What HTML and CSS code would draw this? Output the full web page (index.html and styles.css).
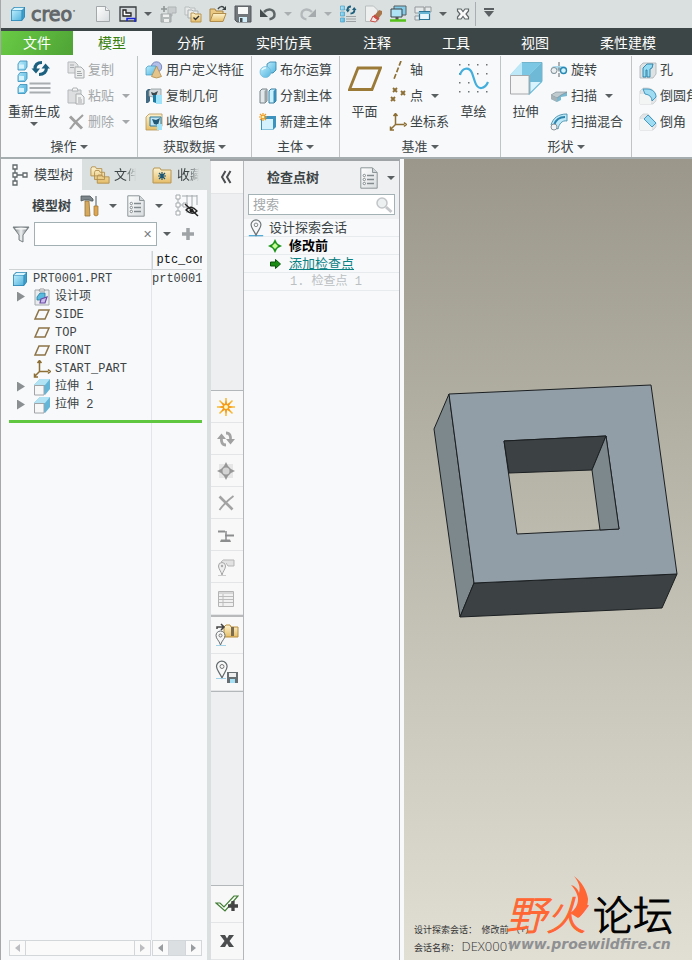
FILE: index.html
```html
<!DOCTYPE html>
<html lang="zh-CN">
<head>
<meta charset="utf-8">
<title>creo</title>
<link rel="stylesheet" href="styles.css">
</head>
<body>
<svg class="sprite" aria-hidden="true">
  <defs>
    <linearGradient id="gBlue" x1="0" y1="0" x2="1" y2="1"><stop offset="0" stop-color="#b9ecfc"/><stop offset="1" stop-color="#54b4de"/></linearGradient>
    <linearGradient id="gGold" x1="0" y1="0" x2="0" y2="1"><stop offset="0" stop-color="#fdf3d0"/><stop offset="1" stop-color="#e5bd68"/></linearGradient>
    <linearGradient id="gPaper" x1="0" y1="0" x2="1" y2="1"><stop offset="0" stop-color="#ffffff"/><stop offset="1" stop-color="#d8dcde"/></linearGradient>
    <linearGradient id="gSteel" x1="0" y1="0" x2="1" y2="0"><stop offset="0" stop-color="#5a6266"/><stop offset=".5" stop-color="#f0f2f3"/><stop offset="1" stop-color="#5a6266"/></linearGradient>
  </defs>
  <symbol id="cube" viewBox="0 0 16 16"><path d="M1 4l3-3h11v10l-3 4H1z" fill="#2c86b5"/><path d="M1.800 4.500h9.700v9.700H1.800z" fill="url(#gBlue)"/><path d="M2 4l2.500-2.300h9.700L12 4z" fill="#d6f5ff"/><path d="M12.300 4.500l2-2.200v8.400l-2 2.700z" fill="#3f9fcb"/></symbol>
  <symbol id="new" viewBox="0 0 18 18"><path d="M2.500 1.500h9l4 4v11h-13z" fill="url(#gPaper)" stroke="#a3a8ab"/><path d="M11.500 1.500v4h4" fill="#eef0f1" stroke="#a3a8ab"/></symbol>
  <symbol id="win" viewBox="0 0 18 18"><path d="M1 2h16v14H1z" fill="#d3d9da" stroke="#383e40" stroke-width="1.300"/><path d="M4 5h3v3h5v3H4z" fill="#fff" stroke="#222" stroke-width="1.300"/><path d="M8 16v-2.500h8V17" fill="none" stroke="#1924d6" stroke-width="1.500"/></symbol>
  <symbol id="regenGray" viewBox="0 0 18 18"><path d="M9 2h8v6h-4v3H9z" fill="#c8cccd" stroke="#aeb3b4"/><path d="M2 9h10v8H2z" fill="#b4b9ba" stroke="#a2a7a8"/><path d="M4 9.500h6V12H4zM5 14h5v3H5z" fill="#eef0f0"/><path d="M5 1v6M2 4h6" stroke="#8f9596" stroke-width="1.600"/></symbol>
  <symbol id="foldChk" viewBox="0 0 18 18"><path d="M1 2h4l1 1h5v7H1z" fill="#e8eaea" stroke="#b8bdbe"/><path d="M4 5h4l1 1h5v7H4z" fill="#eceeee" stroke="#a9aeaf"/><path d="M7 8h3l1 1h6v8H7z" fill="url(#gGold)" stroke="#b99655"/><path d="M9.500 12.500l2 2 3.500-3.500" fill="none" stroke="#333" stroke-width="1.400"/></symbol>
  <symbol id="open" viewBox="0 0 18 18"><path d="M1 16V4h5l1 2h7v3" fill="#e9c983" stroke="#a78345"/><path d="M1 16.500l3-8h13l-3 8z" fill="url(#gGold)" stroke="#b08d4c"/><path d="M9 4c2-3 5-3 6-1" fill="none" stroke="#3b4244" stroke-width="1.500"/><path d="M17 1v4h-4z" fill="#3b4244"/></symbol>
  <symbol id="save" viewBox="0 0 18 18"><path d="M1 1h16v16H3l-2-2z" fill="#71777b" stroke="#53595c"/><path d="M4 2h10v7H4z" fill="#f7f8f8"/><path d="M5 12h8v5H5z" fill="#d0eefa"/><path d="M6 13h2.500v4H6z" fill="#444c50"/></symbol>
  <symbol id="undo" viewBox="0 0 18 18"><path d="M5 7c4-4 10-3 10.500 2 .3 3-2 5-5 5.300" fill="none" stroke="#5e6567" stroke-width="2.500"/><path d="M1 4v8h8z" fill="#454c4e"/></symbol>
  <symbol id="redo" viewBox="0 0 18 18"><path d="M13 7C9 3 3 4 2.500 9c-.3 3 2 5 5 5.300" fill="none" stroke="#b3b9ba" stroke-width="2.300"/><path d="M17 4v8H9z" fill="#a5abac"/></symbol>
  <symbol id="regenS" viewBox="0 0 18 18"><g fill="url(#gBlue)" stroke="#4a9fc6" stroke-width=".7"><path d="M1.500 1h4v4h-4zM1.500 7h4v4h-4zM1.500 13h4v4h-4z"/></g><path d="M7 11.500h10M7 14h10M7 16.500h10" stroke="#9da3a5" stroke-width="1.200"/><path d="M12 1.500C9.500 1.500 8.500 3 8.500 5M11.500 8.500c2.500 0 4-1.500 4-4" fill="none" stroke="#1d607d" stroke-width="1.800"/><path d="M6.500 4.500h4.500L8.800 7.500zM17.500 5H13l2.200-3z" fill="#1d607d"/></symbol>
  <symbol id="erase" viewBox="0 0 18 18"><path d="M1.500 1h8l4 4v11.500h-12z" fill="#eef0f0" stroke="#b9bebf"/><path d="M10 11l5-6 3 1v3l-4 5z" fill="#a8754b"/><path d="M9 11l4.500 3.500-2 2.500-5-1z" fill="#f3e5e4" stroke="#c94c43"/><path d="M10.500 9.500l5 4-1.500 2-5-4z" fill="#c94c43"/></symbol>
  <symbol id="monitor" viewBox="0 0 18 18"><path d="M5 1h12v9H5z" fill="#82ccea" stroke="#565e61"/><path d="M2 4h11v8H2z" fill="#aee2f5" stroke="#3c4548"/><path d="M8 12v3" stroke="#555" stroke-width="3"/><path d="M1 15.500h16" stroke="#55c11b" stroke-width="2.500"/></symbol>
  <symbol id="windows" viewBox="0 0 18 18"><path d="M1 2h9v6H1zM1 11h5v4H1zM11 2h6v5h-6z" fill="#e6e9e9" stroke="#93999b"/><path d="M5.500 6.500h10v8h-10z" fill="#e9f7fc" stroke="#2d7697" stroke-width="1.200"/><path d="M5 8h11" stroke="#6ab5d4" stroke-width="2"/></symbol>
  <symbol id="closeO" viewBox="0 0 14 14"><path d="M1.500 2h3.500l2 2.500L9 2h3.500v2L10 7l2.500 3v2H9L7 9.500 5 12H1.500v-2L4 7 1.500 4z" fill="#fafafa" stroke="#5e6668" stroke-width="1.200"/></symbol>
  <symbol id="regen" viewBox="0 0 34 36"><g stroke="#368eb8" stroke-width=".8"><path d="M1 4l2-3h7v6l-2 3H1zM1 15.500l2-3h7v6l-2 3H1zM1 27.500l2-3h7v6l-2 3H1z" fill="url(#gBlue)"/></g><path d="M2 4.500h5v4H2zM2 16h5v4H2zM2 28h5v4H2z" fill="#d6f3fd"/><path d="M12.500 23.500h21M12.500 28h21M12.500 32.500h21" stroke="#a9adb0" stroke-width="2"/><path d="M25 2.500C20 2.500 18 5 18 9M22 14.500c5 0 7.500-3 7.500-7" fill="none" stroke="#1b607f" stroke-width="3.200"/><path d="M14.500 8.500h8.500l-4 5zM33 8.500h-8.500l4-5z" fill="#1b607f"/></symbol>
  <symbol id="copy" viewBox="0 0 18 18"><path d="M1 1h7l3 3v8H1z" fill="#e1e3e4" stroke="#b7babc"/><path d="M8 6h6l3 3v8H8z" fill="#eceded" stroke="#a9acae"/><path d="M3 4h4M3 6.500h4M10 10.500h4M10 12.500h5M10 14.500h5" stroke="#a6a9ab"/></symbol>
  <symbol id="paste" viewBox="0 0 18 18"><path d="M1 3h13v13H1z" fill="#dcdedf" stroke="#b5b8ba"/><path d="M5 4l1-3h4l1 3z" fill="#f7f7f7" stroke="#b0b3b5"/><path d="M9 7h5l3 3v7H9z" fill="#f0f1f1" stroke="#a8abad"/><path d="M11 11h3M11 13h4M11 15h4" stroke="#a6a9ab"/></symbol>
  <symbol id="delx" viewBox="0 0 18 18"><path d="M3 3.500l12 12" stroke="#a0a0a0" stroke-width="3"/><path d="M16 2C10 7 7 10 3 16" fill="none" stroke="#a0a0a0" stroke-width="2.200"/></symbol>
  <symbol id="udf" viewBox="0 0 18 18"><circle cx="11.500" cy="6" r="5.200" fill="#b4bfe7" stroke="#6473b1" stroke-width=".8"/><path d="M1 7l2-2h8v7l-2 2H1z" fill="url(#gBlue)" stroke="#4197c0" stroke-width=".7"/><path d="M11.500 5l5 10.500q-5 3-10 0z" fill="#e3c48b" stroke="#aa8646" stroke-width=".7"/></symbol>
  <symbol id="copygeo" viewBox="0 0 18 18"><path d="M1 4l2-2h2v12l-2 2H1z" fill="#426a83"/><path d="M4 4l2-2h10v6l-2 2H8l-4-1z" fill="#d4dadd" stroke="#8d979b" stroke-width=".8"/><path d="M6 5l3 1 4-2-2 5-4-1z" fill="#39474e"/><path d="M11 8h6v9h-6z" fill="#9fe3fa"/><path d="M8 8h3v8l-3-1z" fill="#197ca6"/></symbol>
  <symbol id="shrink" viewBox="0 0 18 18"><path d="M1 4l3-3h13v12l-3 4H1z" fill="url(#gGold)" stroke="#b79655" stroke-width=".8"/><path d="M5 4h11v9H5z" fill="#c2e5f3" stroke="#2d789c"/><path d="M7 6l4 1 4-2-2 7-4-1z" fill="#205876"/><path d="M12 11h5v6h-5z" fill="#a2e3fa"/></symbol>
  <symbol id="bool" viewBox="0 0 18 18"><path d="M8 3l3-2h6v8l-3 3H8z" fill="url(#gBlue)" stroke="#2e7fa5" stroke-width=".8"/><circle cx="6.500" cy="11" r="5.500" fill="url(#gBlue)" stroke="#6fb8d7" stroke-width=".7"/><path d="M3 9a4 4 0 0 1 4-2" stroke="#e7faff" fill="none" stroke-width="1.500"/></symbol>
  <symbol id="split" viewBox="0 0 18 18"><path d="M1 4l2-2h5v12l-2 2H1z" fill="#e1e7ea" stroke="#69757b" stroke-width=".9"/><path d="M10 4l2-2h5v12l-2 2h-5z" fill="#c9f0fc" stroke="#216f95" stroke-width=".9"/><path d="M14.500 4v12l2.500-2V2z" fill="#388eb8"/><path d="M5.500 4v12L8 14V2z" fill="#99a3a8"/></symbol>
  <symbol id="newbody" viewBox="0 0 18 18"><path d="M2 6l3-3h12v11l-3 3H2z" fill="#3d93bd"/><path d="M3 6h11v10.500H3z" fill="#d3f2fd"/><path d="M4 0v8M0 4h8M1 1l6 6M7 1L1 7" stroke="#f19a1f" stroke-width="1.200"/><circle cx="4" cy="4" r="1.300" fill="#fff2a4"/></symbol>
  <symbol id="planeL" viewBox="0 0 34 36"><path d="M10 8h22.500l-8.500 21.500H1.500z" fill="none" stroke="#9b7a38" stroke-width="2.800"/></symbol>
  <symbol id="axis" viewBox="0 0 18 18"><path d="M12 0L5 18" stroke="#8d6f35" stroke-width="1.700" stroke-dasharray="5 2"/></symbol>
  <symbol id="points" viewBox="0 0 18 18"><path d="M4 1l4 4M8 1L4 5M12 4l4 4M16 4l-4 4M2 10l4 4M6 10l-4 4" stroke="#8d6f35" stroke-width="1.900"/></symbol>
  <symbol id="csys" viewBox="0 0 18 18"><path d="M6.500 2v9.500h9M6.500 11.500L2 16M4.500 3l2-2.500 2 2.500M15 9.500l2.500 2-2.500 2M1.500 13.500v3.500H5" fill="none" stroke="#8d6f35" stroke-width="1.500"/></symbol>
  <symbol id="sketch" viewBox="0 0 34 36"><g fill="#6e7375"><path d="M2 4h1.500v1.500H2zM11 4h1.500v1.500H11zM20 4h1.500v1.500H20zM29 4h1.500v1.500H29zM2 13h1.500v1.500H2zM20 13h1.500v1.500H20zM29 13h1.500v1.500H29zM2 22h1.500v1.500H2zM11 22h1.500v1.500H11zM2 31h1.500v1.500H2zM11 31h1.500v1.500H11zM20 31h1.500v1.500H20zM29 31h1.500v1.500H29z"/></g><path d="M3 15C5 8 12 6 15 13l3 9c3 9 10 7 13 0" fill="none" stroke="#43aedb" stroke-width="2.200"/></symbol>
  <symbol id="extL" viewBox="0 0 34 36"><path d="M1 15L13 2h20v20L20 35z" fill="#91d5ee"/><path d="M1 15L13 2h20L20 15z" fill="#bde8f7"/><path d="M20 15L33 2v20L20 35z" fill="#6fb9d6"/><path d="M13 2v13h7L33 2z" fill="#7cc8e4"/><path d="M1.500 15.500H20V34H1.500z" fill="#f5f5f6" stroke="#a6a8aa"/><path d="M13 2.500h20v19" stroke="#73b4cd" fill="none"/><path d="M21.500 32l10-10h-10z" fill="#d9f4fd"/></symbol>
  <symbol id="ext" viewBox="0 0 18 18"><path d="M1 7l6-6h10v10l-5 6z" fill="#63b6d8"/><path d="M1 7l6-6h10l-5 6z" fill="#b1e3f5"/><path d="M1.500 7.500H11V17H1.500z" fill="#f7f7f7" stroke="#a0a4a6"/></symbol>
  <symbol id="revolve" viewBox="0 0 18 18"><path d="M1 9q0-4 4-4h8q4 0 4 4l-1 4h-4V9H6v4H2z" fill="#abd9ec"/><circle cx="4" cy="9.500" r="3" fill="#eaf0f2" stroke="#848d91"/><circle cx="13.500" cy="9.500" r="3" fill="#d2f3fd" stroke="#2788b3" stroke-width="1.400"/><path d="M9 1v16" stroke="#777d80" stroke-width="1.200" stroke-dasharray="4 1.500"/></symbol>
  <symbol id="sweep" viewBox="0 0 18 18"><path d="M1 9l5-4h11v4l-6 1v3L7 15l-6-3z" fill="#78b8d1"/><path d="M1 8l5-3h11l-6 3-4 3z" fill="#c0cbd0" stroke="#7b888d" stroke-width=".6"/><path d="M1 8l6 3v4l-6-3z" fill="#a7b2b7"/></symbol>
  <symbol id="blend" viewBox="0 0 18 18"><path d="M1 12C3 5 8 1 17 1v7c-5-1-8 3-9 8z" fill="#bde8f7" stroke="#478eac" stroke-width=".9"/><path d="M4 12C6 6 10 4 15 4" fill="none" stroke="#2c84ad" stroke-width="2"/><circle cx="4" cy="14" r="3" fill="#f1f3f4" stroke="#8c9395"/></symbol>
  <symbol id="hole" viewBox="0 0 18 18"><path d="M1 5l3-3h13v11l-3 4H1z" fill="#dfe2e3" stroke="#abb0b2" stroke-width=".8"/><path d="M4 16V7l4-4h6l-1 4-2 1v8h-3V9H7v7z" fill="#93dbf3" stroke="#267da5" stroke-width=".9"/></symbol>
  <symbol id="round" viewBox="0 0 18 18"><path d="M1 4l3-3h4c5 0 9 4 9 9v4l-3 3H1z" fill="#e2e4e5" stroke="#cdd0d1" stroke-width=".8"/><path d="M1 7h5c4 0 6 3 6 6v4H1z" fill="#f3f4f4"/><path d="M4 2h4c6 0 9 4 9 8l-4 4q0-6-7-7z" fill="#9fdcf2" stroke="#3692bd" stroke-width=".9"/></symbol>
  <symbol id="chamfer" viewBox="0 0 18 18"><path d="M1 4l3-3h5l8 9v4l-3 3H1z" fill="#e2e4e5" stroke="#cdd0d1" stroke-width=".8"/><path d="M1 6h4l8 8v3H1z" fill="#f3f4f4"/><path d="M5 6l4-4 8 8-4 4z" fill="#9fdcf2" stroke="#3692bd" stroke-width=".9"/></symbol>
  <symbol id="treeI" viewBox="0 0 20 22"><g fill="#fff" stroke="#62696b" stroke-width="1.300"><path d="M5 5v12M5 11h8" /><path d="M3 1h4v4H3zM3 9h4v4H3zM3 17h4v4H3zM13 9h4v4h-4z"/></g></symbol>
  <symbol id="folders" viewBox="0 0 22 20"><g fill="url(#gGold)" stroke="#b28f50"><path d="M1 3l1-2h4l1 2h6v8H1zM5 7l1-2h4l1 2h5v8H5zM8 12l1-2h4l1 2h7v7H8z"/></g></symbol>
  <symbol id="fav" viewBox="0 0 20 18"><path d="M1 4l1-2h6l1 2h10v13H1z" fill="url(#gGold)" stroke="#b79655"/><path d="M10 6v8M6 10h8M7 7l6 6M13 7l-6 6" stroke="#1d5673" stroke-width="1.200"/></symbol>
  <symbol id="tools" viewBox="0 0 20 22"><path d="M5 6h4l1 15H5z" fill="#d6a95c" stroke="#94713a" stroke-width=".8"/><path d="M1 1h9l3 3v2h-2L9 5H4L1 6z" fill="#7d868a" stroke="#4d5558" stroke-width=".8"/><path d="M15 1h2v10h-2z" fill="#a3aaad"/><path d="M14 11h4v9q-2 2-4 0z" fill="#dda653" stroke="#9b7434" stroke-width=".7"/></symbol>
  <symbol id="list" viewBox="0 0 18 22"><path d="M.8.800h11.700l4.700 4.700v15.700H.8z" fill="url(#gPaper)" stroke="#8e9699"/><path d="M12.500 1v4.500H17" fill="#cfd4d6" stroke="#8e9699"/><path d="M7 8.500h7M7 12.500h7M7 16.500h7" stroke="#848b8e" stroke-width="1.300"/><g fill="#fff" stroke="#70777a" stroke-width=".8"><circle cx="4.300" cy="8.500" r="1.200"/><circle cx="4.300" cy="12.500" r="1.200"/><circle cx="4.300" cy="16.500" r="1.200"/></g></symbol>
  <symbol id="treeEye" viewBox="0 0 24 24"><g fill="#fff" stroke="#a4a9ab"><path d="M3 2v18M3 11h7M12 1v18M17 1v12M22 1v10M7 2h15" fill="none"/><path d="M1 1h4v4H1zM1 9h4v4H1zM1 17h4v4H1zM8 9h4v4H8z"/></g><path d="M11 16q5-6 11 1-5 5-11-1z" fill="#e8e9e9" stroke="#222" stroke-width="1.300"/><circle cx="16.500" cy="16.500" r="2" fill="#222"/><path d="M10 10l13 12" stroke="#222" stroke-width="1.500"/></symbol>
  <symbol id="funnel" viewBox="0 0 18 18"><path d="M1 2h16l-6 8v7l-4-2v-5z" fill="url(#gSteel)" stroke="#798083"/><path d="M3 3h12l-1 1.500H4z" fill="#f6f7f7"/></symbol>
  <symbol id="plus" viewBox="0 0 14 14"><path d="M7 1v12M1 7h12" stroke="#a0a3a5" stroke-width="3.500"/></symbol>
  <symbol id="items" viewBox="0 0 18 18"><path d="M2 2h14v15H2z" fill="#e9ebec" stroke="#a5aaad"/><path d="M6 3l1-2h4l1 2z" fill="#fff" stroke="#999"/><path d="M4 9l3-4h5v4l-3 3H4z" fill="#59bbdf" stroke="#287ca1" stroke-width=".8"/><path d="M8 11l6-2-2 6H7z" fill="#cbbce9" stroke="#6b4ba6" stroke-width="1.200"/></symbol>
  <symbol id="plane" viewBox="0 0 18 14"><path d="M6 2h10l-4 9H2z" fill="none" stroke="#8d7345" stroke-width="1.500"/></symbol>
  <symbol id="pin" viewBox="0 0 18 20"><path d="M1 18.500h16" stroke="#54abd5" stroke-width="1.500"/><path d="M9 18C7 13 3.500 10 3.500 6.500a5.500 5.500 0 0 1 11 0C14.500 10 11 13 9 18z" fill="#f7f8f9" stroke="#6c7274" stroke-width="1.300"/><circle cx="9" cy="6.500" r="2" fill="none" stroke="#777d7f"/></symbol>
  <symbol id="target" viewBox="0 0 14 14"><path d="M7 0l2 4 1 1 4 2-4 2-1 1-2 4-2-4-1-1-4-2 4-2 1-1z" fill="#1c9218"/><path d="M7 4l3 3-3 3-3-3z" fill="#c9ff99"/></symbol>
  <symbol id="arrowG" viewBox="0 0 14 14"><path d="M2.500 5h5V2.500l5 4.500-5 4.500V9h-5z" fill="#198c13" stroke="#0b530b"/></symbol>
  <symbol id="mag" viewBox="0 0 18 18"><path d="M11 11l5.500 5" stroke="#c5c8ca" stroke-width="3"/><circle cx="7" cy="7" r="5" fill="#edf0f1" stroke="#c2c6c8" stroke-width="1.500"/></symbol>
  <symbol id="star" viewBox="0 0 18 18"><path d="M9 0v18M0 9h18M2.500 2.500l13 13M15.500 2.500l-13 13" stroke="#f8bb36" stroke-width="1.600"/><path d="M9 2l1.300 4L14 4l-2 3.700L16 9l-4 1.300L14 14l-3.700-2L9 16l-1.300-4L4 14l2-3.700L2 9l4-1.300L4 4l3.700 2z" fill="#f59b1b"/><circle cx="9" cy="9" r="2" fill="#fff7bf"/></symbol>
  <symbol id="cycle" viewBox="0 0 18 18"><path d="M9 15C5 15 4 12 4.500 7M9 3c4 0 5 3 4.500 8" fill="none" stroke="#a4a4a4" stroke-width="2.800"/><path d="M0 9l4.500-5.500L9 9zM18 9l-4.500 5.500L9 9z" fill="#a0a0a0"/></symbol>
  <symbol id="gem" viewBox="0 0 18 18"><path d="M2 2h14v14H2z" fill="#e6e6e6"/><path d="M9 0l2 4 3 3 4 2-4 2-3 3-2 4-2-4-3-3-4-2 4-2 3-3z" fill="#979797"/><circle cx="9" cy="9" r="3.500" fill="#d4d4d4"/></symbol>
  <symbol id="xg" viewBox="0 0 18 18"><path d="M2.500 2.500l13 13" stroke="#a3a3a3" stroke-width="2.600"/><path d="M16.500 2C10 7 6 11 2.500 16" fill="none" stroke="#a3a3a3" stroke-width="1.800"/></symbol>
  <symbol id="level" viewBox="0 0 18 18"><path d="M1 5.500h7M8 9.500h9" stroke="#8b8d8e" stroke-width="2.200"/><path d="M9 5v9" stroke="#8b8d8e" stroke-width="1.500"/><path d="M4 13.500h9l1 2.500H3z" fill="#8b8d8e"/></symbol>
  <symbol id="pinG" viewBox="0 0 18 18"><path d="M4 4q2-3 5-2h8v6h-6L9 5" fill="#e2e2e2" stroke="#b5b5b5"/><path d="M5 17C4 13 1.500 11 1.500 8a3.500 3.500 0 0 1 7 0C8.500 11 6 13 5 17z" fill="#eee" stroke="#a4a4a4"/><circle cx="5" cy="8" r="1.200" fill="#aaa"/><path d="M1 17.500h8" stroke="#ccc"/></symbol>
  <symbol id="table" viewBox="0 0 18 18"><path d="M1.500 1.500h15v15h-15z" fill="#f1f1f1" stroke="#b4b4b4"/><path d="M2 3h14M6 4v12M2 6.500h14M2 9.500h14M2 12.500h14" stroke="#bcbcbc"/></symbol>
  <symbol id="pinFold" viewBox="0 0 24 24"><path d="M9 4l2-2h4l1 2h7v10H9z" fill="url(#gGold)" stroke="#b88e3d"/><path d="M16 4h3v9h-3z" fill="#7a6b4c"/><path d="M5.500 22C4 17 1 16 1 12.500a4.500 4.500 0 0 1 9 0C10 16 7 17 5.500 22z" fill="#f6f6f6" stroke="#686e70"/><circle cx="5.500" cy="12.500" r="1.500" fill="none" stroke="#777"/><path d="M2 6V4h6M6 1l3 3-3 3" fill="none" stroke="#444" stroke-width="1.500"/><path d="M1 22.500h10" stroke="#a4d3e8"/></symbol>
  <symbol id="pinSave" viewBox="0 0 24 24"><path d="M7 18C5 13 1.500 10 1.500 6.500a5.300 5.300 0 0 1 10.600 0C12 10 9 13 7 18z" fill="#f8f8f8" stroke="#62696b" stroke-width="1.200"/><circle cx="7" cy="6.500" r="2" fill="none" stroke="#777"/><path d="M1 18.500h10" stroke="#9fd0e5"/><path d="M12 12h11v11H12z" fill="#686f73"/><path d="M14 13h7v4h-7z" fill="#eee"/><path d="M15 19h5v4h-5z" fill="#a5dff3"/></symbol>
  <symbol id="okPlus" viewBox="0 0 24 20"><path d="M1 9h4l4 4L19 2h4L10 17z" fill="#f7fcf5" stroke="#437d35" stroke-width="1.200"/><path d="M18 7v10M13 12h10" stroke="#444" stroke-width="3.300"/></symbol>
  <symbol id="xb" viewBox="0 0 14 14"><path d="M0 1h5l2 3.500L9 1h5l-4.500 6 4.500 6H9L7 9.500 5 13H0l4.500-6z" fill="#4b4d4e"/></symbol>
  <symbol id="chev" viewBox="0 0 14 14"><path d="M6.500 1L3 7l3.500 6M11.500 1L8 7l3.500 6" fill="none" stroke="#4c4f50" stroke-width="2"/></symbol>
</svg>

<div class="app">
  <header class="titlebar">
    <svg class="i16 logo"><use href="#cube"/></svg>
    <span class="brand">creo<sup>•</sup></span>
    <nav class="quick" aria-label="快速访问">
      <button aria-label="新建"><svg class="i18"><use href="#new"/></svg></button>
      <button aria-label="窗口"><svg class="i18"><use href="#win"/></svg></button>
      <button class="drop" aria-label="更多"><i class="caret"></i></button>
      <button aria-label="再生"><svg class="i18"><use href="#regenGray"/></svg></button>
      <button aria-label="选择"><svg class="i18"><use href="#foldChk"/></svg></button>
      <button aria-label="打开"><svg class="i18"><use href="#open"/></svg></button>
      <button aria-label="保存"><svg class="i18"><use href="#save"/></svg></button>
      <button aria-label="撤消"><svg class="i18"><use href="#undo"/></svg></button>
      <button class="drop" aria-label="撤消列表"><i class="caret dim"></i></button>
      <button aria-label="重做"><svg class="i18"><use href="#redo"/></svg></button>
      <button class="drop" aria-label="重做列表"><i class="caret dim"></i></button>
      <button aria-label="重新生成"><svg class="i18"><use href="#regenS"/></svg></button>
      <button aria-label="拭除"><svg class="i18"><use href="#erase"/></svg></button>
      <button aria-label="显示"><svg class="i18"><use href="#monitor"/></svg></button>
      <button aria-label="窗口列表"><svg class="i18"><use href="#windows"/></svg></button>
      <button class="drop" aria-label="窗口菜单"><i class="caret"></i></button>
      <button aria-label="关闭"><svg class="i14"><use href="#closeO"/></svg></button>
      <span class="vsep"></span>
      <button aria-label="自定义"><i class="caret lined"></i></button>
    </nav>
  </header>

  <nav class="tabs">
    <button class="tab file">文件</button><button class="tab active">模型</button><button class="tab">分析</button><button class="tab">实时仿真</button><button class="tab">注释</button><button class="tab">工具</button><button class="tab">视图</button><button class="tab">柔性建模</button>
  </nav>

  <section class="ribbon">
    <div class="group">
      <div class="tools">
        <button class="big wide"><svg class="i36"><use href="#regen"/></svg><span>重新生成</span><i class="caret"></i></button>
        <div class="stack">
          <button disabled><svg class="i18"><use href="#copy"/></svg>复制</button>
          <button disabled><svg class="i18"><use href="#paste"/></svg>粘贴<i class="caret"></i></button>
          <button disabled><svg class="i18"><use href="#delx"/></svg>删除<i class="caret"></i></button>
        </div>
      </div>
      <button class="label">操作<i class="caret"></i></button>
    </div>
    <div class="group">
      <div class="tools">
        <div class="stack lead">
          <button><svg class="i18"><use href="#udf"/></svg>用户定义特征</button>
          <button><svg class="i18"><use href="#copygeo"/></svg>复制几何</button>
          <button><svg class="i18"><use href="#shrink"/></svg>收缩包络</button>
        </div>
      </div>
      <button class="label">获取数据<i class="caret"></i></button>
    </div>
    <div class="group">
      <div class="tools">
        <div class="stack lead">
          <button><svg class="i18"><use href="#bool"/></svg>布尔运算</button>
          <button><svg class="i18"><use href="#split"/></svg>分割主体</button>
          <button><svg class="i18"><use href="#newbody"/></svg>新建主体</button>
        </div>
      </div>
      <button class="label">主体<i class="caret"></i></button>
    </div>
    <div class="group">
      <div class="tools">
        <button class="big"><svg class="i36"><use href="#planeL"/></svg><span>平面</span></button>
        <div class="stack">
          <button><svg class="i18"><use href="#axis"/></svg>轴</button>
          <button><svg class="i18"><use href="#points"/></svg>点<i class="caret"></i></button>
          <button><svg class="i18"><use href="#csys"/></svg>坐标系</button>
        </div>
        <button class="big"><svg class="i36"><use href="#sketch"/></svg><span>草绘</span></button>
      </div>
      <button class="label">基准<i class="caret"></i></button>
    </div>
    <div class="group">
      <div class="tools">
        <button class="big"><svg class="i36"><use href="#extL"/></svg><span>拉伸</span></button>
        <div class="stack">
          <button><svg class="i18"><use href="#revolve"/></svg>旋转</button>
          <button><svg class="i18"><use href="#sweep"/></svg>扫描<i class="caret"></i></button>
          <button><svg class="i18"><use href="#blend"/></svg>扫描混合</button>
        </div>
      </div>
      <button class="label">形状<i class="caret"></i></button>
    </div>
    <div class="group last">
      <div class="tools">
        <div class="stack lead">
          <button><svg class="i18"><use href="#hole"/></svg>孔</button>
          <button><svg class="i18"><use href="#round"/></svg>倒圆角</button>
          <button><svg class="i18"><use href="#chamfer"/></svg>倒角</button>
        </div>
      </div>
    </div>
  </section>

  <main class="work">
    <aside class="navigator">
      <div class="ntabs">
        <button class="ntab on"><svg class="i22"><use href="#treeI"/></svg><span>模型树</span></button>
        <button class="ntab files"><svg class="i22"><use href="#folders"/></svg><span>文件</span></button>
        <button class="ntab favs"><svg class="i22"><use href="#fav"/></svg><span>收藏</span></button>
      </div>
      <div class="nbody">
        <div class="nhead">
          <h2>模型树</h2>
          <button aria-label="设置"><svg class="i22"><use href="#tools"/></svg></button>
          <button aria-label="设置菜单"><i class="caret"></i></button>
          <button aria-label="显示"><svg class="i22"><use href="#list"/></svg></button>
          <button aria-label="显示菜单"><i class="caret"></i></button>
          <button class="end" aria-label="隐藏树"><svg class="i24"><use href="#treeEye"/></svg></button>
        </div>
        <div class="filter">
          <svg class="i18"><use href="#funnel"/></svg>
          <div class="field"><input type="text" aria-label="过滤"><button aria-label="清除">✕</button></div>
          <button aria-label="过滤菜单"><i class="caret"></i></button>
          <button aria-label="添加"><svg class="i14"><use href="#plus"/></svg></button>
        </div>
        <div class="treewrap">
          <table class="tree">
            <thead><tr><th></th><th>ptc_common</th></tr></thead>
            <tbody>
              <tr><td><div class="node root"><svg class="i16"><use href="#cube"/></svg>PRT0001.PRT</div></td><td>prt0001</td></tr>
              <tr><td><div class="node"><i class="tw"></i><svg class="i18"><use href="#items"/></svg>设计项</div></td><td></td></tr>
              <tr><td><div class="node"><i></i><svg class="i18"><use href="#plane"/></svg>SIDE</div></td><td></td></tr>
              <tr><td><div class="node"><i></i><svg class="i18"><use href="#plane"/></svg>TOP</div></td><td></td></tr>
              <tr><td><div class="node"><i></i><svg class="i18"><use href="#plane"/></svg>FRONT</div></td><td></td></tr>
              <tr><td><div class="node"><i></i><svg class="i18"><use href="#csys"/></svg>START_PART</div></td><td></td></tr>
              <tr><td><div class="node"><i class="tw"></i><svg class="i18"><use href="#ext"/></svg>拉伸 1</div></td><td></td></tr>
              <tr><td><div class="node"><i class="tw"></i><svg class="i18"><use href="#ext"/></svg>拉伸 2</div></td><td></td></tr>
            </tbody>
          </table>
          <div class="insert"></div>
        </div>
        <div class="bars">
          <div class="bar off"><button aria-label="向左"><i class="l"></i></button><span></span><button aria-label="向右"><i class="r"></i></button></div>
          <div class="bar"><button aria-label="向左"><i class="l"></i></button><span class="thumb"></span><button aria-label="向右"><i class="r"></i></button></div>
        </div>
      </div>
    </aside>

    <section class="explore">
      <div class="rail">
        <button class="fold" aria-label="折叠"><svg class="i14"><use href="#chev"/></svg></button>
        <div class="cmds">
          <button aria-label="新建"><svg class="i18"><use href="#star"/></svg></button>
          <button aria-label="更新"><svg class="i18"><use href="#cycle"/></svg></button>
          <button aria-label="激活"><svg class="i18"><use href="#gem"/></svg></button>
          <button aria-label="删除"><svg class="i18"><use href="#xg"/></svg></button>
          <button aria-label="级别"><svg class="i18"><use href="#level"/></svg></button>
          <button aria-label="编辑"><svg class="i18"><use href="#pinG"/></svg></button>
          <button aria-label="表"><svg class="i18"><use href="#table"/></svg></button>
          <button class="tall first" aria-label="打开会话"><svg class="i24"><use href="#pinFold"/></svg></button>
          <button class="tall" aria-label="保存会话"><svg class="i24"><use href="#pinSave"/></svg></button>
        </div>
        <div class="done">
          <button class="tall" aria-label="接受"><svg class="i24"><use href="#okPlus"/></svg></button>
          <button class="tall" aria-label="关闭"><svg class="i14"><use href="#xb"/></svg></button>
        </div>
      </div>
      <div class="check">
        <div class="chead">
          <h2>检查点树</h2>
          <button aria-label="设置"><svg class="i22"><use href="#list"/></svg></button>
          <button aria-label="设置菜单"><i class="caret"></i></button>
        </div>
        <div class="search"><input type="text" placeholder="搜索" aria-label="搜索"><svg class="i18"><use href="#mag"/></svg></div>
        <ul class="points">
          <li class="top"><svg class="i18"><use href="#pin"/></svg>设计探索会话</li>
          <li class="sub now"><svg class="i14"><use href="#target"/></svg>修改前</li>
          <li class="sub"><svg class="i14"><use href="#arrowG"/></svg><a href="#add">添加检查点</a></li>
          <li class="sub ghost">1. 检查点 1</li>
        </ul>
      </div>
    </section>

    <section class="viewport">
      <svg class="model" viewBox="0 0 288 500" width="288" height="500" role="img" aria-label="零件">
        <g stroke="#1b1f21" stroke-linejoin="round">
          <path d="M30 270L45 235 70 424 56 458z" fill="#7d888d"/>
          <path d="M70 424L273 415 258 449 56 458z" fill="#3c4144"/>
          <path d="M45 235L247 226 273 415 70 424zM100 282L113 375 215 370 202 277z" fill="#929ea7" fill-rule="evenodd"/>
          <path d="M100 282L202 277 188 311 105 314z" fill="#3c4144"/>
          <path d="M202 277L215 370 196 371 188 311z" fill="#7d888d"/>
        </g>
      </svg>
      <div class="note">
        <p>设计探索会话： <span>修改前 （+）</span></p>
        <p>会话名称： <b>DEX0001</b></p>
      </div>
      <div class="mark">
        <p class="name"><em>野火</em>论坛</p>
        <p class="url">www.proewildfire.cn</p>
        <svg class="flame" viewBox="0 0 20 42"><path d="M4 0c8 6 13 15 14 23 0 9-5 15-10 19L0 37c5-3 8-8 8-14C8 18 4 12 1 9c4 1 7 4 8 8C11 11 8 5 4 0z" fill="#ff6633"/></svg>
      </div>
    </section>
  </main>
</div>
</body>
</html>
```
FILE: styles.css
```css
* { box-sizing: border-box; }
body, h2, p, ul { margin: 0; padding: 0; }
body {
  font: 13px/18px "Liberation Sans", "Noto Sans CJK SC", sans-serif;
  color: #3d4446;
  overflow: hidden;
}
button {
  font: inherit; color: inherit; background: none; border: 0; padding: 0;
  display: flex; align-items: center; justify-content: center; white-space: nowrap;
}
svg { display: block; flex: none; }
.sprite { position: absolute; width: 0; height: 0; }
.i14 { width: 14px; height: 14px; }
.i16 { width: 16px; height: 16px; }
.i18 { width: 18px; height: 18px; }
.i22 { width: 20px; height: 22px; }
.i24 { width: 24px; height: 24px; }
.i36 { width: 34px; height: 36px; }
.caret { border: 4px solid transparent; border-top-color: #5a6061; border-bottom: 0; flex: none; }
.caret.dim { border-top-color: #a9afb0; }
.caret.lined { position: relative; border-width: 6px 5px 0; }
.caret.lined::before { content: ""; position: absolute; left: -5px; top: -9px; width: 10px; height: 2px; background: #5a6061; }

.app { height: 100vh; display: flex; flex-direction: column; border-left: 1px solid #a6a8aa; background: #f7f9fb; }

.titlebar { height: 28px; flex: none; display: flex; align-items: center; background: #dae0df; padding-left: 9px; }
.brand { width: 64px; padding-left: 5px; font: 19px/26px "DejaVu Sans", sans-serif; color: #62676a; -webkit-text-stroke: 1px #62676a; white-space: nowrap; }
.brand sup { font-size: 6px; line-height: 6px; vertical-align: 8px; -webkit-text-stroke: 0; }
.quick { display: flex; height: 28px; align-items: center; }
.quick button { width: 25px; height: 28px; }
.quick .drop { width: 15px; }
.vsep { width: 1px; height: 24px; background: #a9afb0; }

.tabs { flex: none; height: 27px; padding-top: 3px; display: flex; background: #3d4646; color: #fff; font-size: 14px; }
.tab { flex: none; height: 24px; padding: 0 26px 0 25px; }
.tab.file { padding: 0 22px; background: linear-gradient(120deg, #69cb45, #4fa335); }
.tab.active { background: #f7f9fb; color: #39800f; }

.ribbon {
  flex: none; height: 104px; padding: 1px 0 0; display: grid; overflow: hidden;
  grid-template-columns: 137px 114px 88px 161px 131px 1fr;
  border-bottom: 2px solid #a5adae;
}
.group { display: flex; flex-direction: column; border-right: 1px solid #c0c4c5; min-width: 0; }
.group.last { border: 0; }
.tools { display: flex; height: 79px; padding-top: 1px; }
.stack { display: flex; flex-direction: column; flex: none; }
.stack.lead { padding-left: 7px; }
.stack button { height: 26px; justify-content: flex-start; gap: 3px; }
.stack .caret { margin-left: 5px; }
.stack button:disabled { color: #a5a8aa; }
.stack button:disabled .caret { border-top-color: #a5a8aa; }
.big { flex: none; width: 49px; flex-direction: column; justify-content: flex-start; padding-top: 3px; }
.big span { padding: 7px 0 1px; }
.big.wide { width: 66px; }
.label { flex: 1; gap: 3px; padding-top: 2px; }

.work { flex: 1; min-height: 0; display: flex; }
.navigator { width: 209px; flex: none; display: flex; flex-direction: column; background: #dae0df; padding-right: 3px; }
.ntabs { display: flex; height: 31px; flex: none; }
.ntab { gap: 4px; overflow: hidden; justify-content: flex-start; padding-left: 8px; }
.ntab.on { width: 81px; background: #f7f9fb; padding-left: 9px; }
.ntab.files { width: 55px; }
.ntab.favs { width: 63px; padding-left: 15px; gap: 5px; }
.files span, .favs span { overflow: hidden; width: 22px; flex: none; text-align: left; -webkit-mask-image: linear-gradient(90deg, #000 50%, transparent); mask-image: linear-gradient(90deg, #000 50%, transparent); }
.nbody { flex: 1; min-height: 0; display: flex; flex-direction: column; background: #f7f9fb; padding: 0 5px 4px 8px; }
h2 { font-size: 13px; line-height: 18px; font-weight: 700; }
.nhead { display: flex; align-items: center; height: 32px; padding-left: 23px; gap: 9px; }
.nhead .end { margin-left: 3px; }
.filter { display: flex; align-items: center; height: 24px; gap: 5px; padding: 0 3px; }
.filter > button { padding-left: 1px; margin-right: 4px; }
.field { flex: 1; height: 24px; min-width: 0; margin-left: -1px; display: flex; align-items: center; background: #fff; border: 1px solid #a3b0b3; padding-right: 4px; }
.field input { flex: 1; min-width: 0; border: 0; outline: 0; background: none; }
.field button { font-size: 11px; color: #777d7f; }
.treewrap { flex: 1; margin-top: 5px; overflow: hidden; background: linear-gradient(#e3e6e8, #e3e6e8) 142px 0 / 1px 100% no-repeat; }
.tree { width: 100%; table-layout: fixed; border-collapse: collapse; font: 12px/18px "Liberation Mono", "Noto Sans CJK SC", monospace; }
.tree th { height: 18px; padding: 2px 0 0 4px; border-bottom: 1px solid #cfd3d4; font-weight: 400; text-align: left; color: #111; overflow: hidden; white-space: nowrap; line-height: 15px; }
.tree th:first-child { width: 143px; border-right: 1px solid #cfd3d4; }
.tree td { height: 18px; padding: 0; white-space: nowrap; overflow: hidden; }
.node { display: flex; align-items: center; height: 18px; gap: 4px; padding-left: 8px; }
.node.root { padding-left: 3px; gap: 5px; }
.node i { width: 8px; height: 10px; margin-right: 4px; }
.node .tw { background: #8b8f91; clip-path: polygon(0 0, 100% 50%, 0 100%); }
.insert { height: 3px; margin-top: 6px; background: #60c740; }
.bars { display: flex; flex: none; gap: 1px; height: 16px; }
.bar { display: flex; width: 50px; border: 1px solid #d3d7d9; background: #fafafb; }
.bar.off { flex: 1; }
.bar button { width: 15px; }
.bar span { flex: 1; border: solid #d3d7d9; border-width: 0 1px; }
.bar .thumb { background: #dcdfe1; }
.bar i { border: 4px solid transparent; }
.bar .l { border-right: 5px solid #999da0; border-left: 0; }
.bar .r { border-left: 5px solid #999da0; border-right: 0; }
.bar.off i { opacity: .65; }

.explore { width: 190px; flex: none; display: flex; border-top: 2px solid #a0a3a6; border-right: 1px solid #a8abad; }
.rail { width: 34px; flex: none; display: flex; flex-direction: column; background: #eeeff1; border-right: 1px solid #b4b7ba; border-left: 1px solid #dae0df; }
.rail button { width: 100%; height: 32px; flex: none; background: #f8f8f9; border-bottom: 1px solid #e3e5e7; padding-right: 2px; }
.rail .fold { height: 33px; }
.cmds { margin-top: 196px; border-top: 1px solid #b4b7ba; border-bottom: 1px solid #b4b7ba; }
.rail .tall { height: 37px; padding-right: 0; }
.rail .first { border-top: 2px solid #b7b9bb; height: 39px; }
.done { margin-top: auto; border-top: 1px solid #b4b7ba; }
.check { flex: 1; min-width: 0; background: #f7f9fb; }
.chead { display: flex; align-items: center; height: 33px; background: #eef0f1; gap: 8px; padding-right: 4px; }
.chead h2 { flex: 1; padding-left: 23px; }
.search { display: flex; align-items: center; background: #fff; border: 1px solid #a3b2b5; height: 21px; margin: 0 4px; padding: 0 1px 0 4px; box-shadow: 0 0 0 4px #eef0f1; }
.search input { flex: 1; min-width: 0; border: 0; outline: 0; padding: 0; background: none; font: inherit; }
.search input::placeholder { color: #a4a8aa; }
.points { list-style: none; margin-top: 4px; position: relative; }
.points li { height: 18px; display: flex; align-items: center; gap: 7px; border-bottom: 1px solid #e8ebed; white-space: nowrap; padding-top: 1px; }
.points .top { padding-left: 3px; gap: 4px; }
.points .sub { padding-left: 24px; }
.now { color: #000; font-weight: 700; }
.points a { color: #0b8083; text-underline-offset: 1px; }
.points .ghost { padding-left: 46px; color: #bbbfc1; font: 12px/17px "Liberation Mono", "Noto Sans CJK SC", monospace; }

.viewport { flex: 1; min-width: 0; position: relative; overflow: hidden; border-left: 4px solid #f7f9fb; background: linear-gradient(#9b988b, #e1dfd4); }
.model { position: absolute; left: 0; top: 0; }
.note { position: absolute; left: 10px; bottom: 4px; font-size: 9px; line-height: 16px; white-space: nowrap; color: #333; }
.note span { padding-left: 2px; }
.note b { font: 300 13px/16px "Open Sans", sans-serif; }
.mark { position: absolute; left: 102px; bottom: 6px; white-space: nowrap; }
.name { font: 300 40px/46px "Noto Sans CJK SC", sans-serif; color: #000; -webkit-text-stroke: 1px; }
.name em { color: #ff6633; font-style: italic; margin-right: 7px; }
.url { font: italic 700 14px/16px "DejaVu Sans", sans-serif; color: #8f9092; padding: 0 0 2px 2px; }
.flame { position: absolute; left: 64px; top: -14px; width: 20px; height: 42px; }
```
